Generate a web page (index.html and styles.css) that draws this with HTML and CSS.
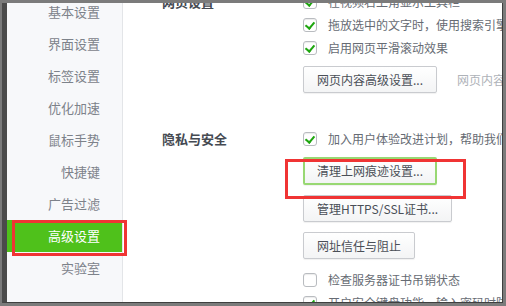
FILE: index.html
```html
<!DOCTYPE html>
<html>
<head>
    <meta http-equiv="Content-Type" content="text/html; charset=utf-8" />
    <title>选项 - 高级设置</title>
    <link rel="stylesheet" href="styles.css">
</head>
<body>

<div class="win">

    <!-- 左侧菜单 -->
    <ul class="side">
        <li class="side-item">基本设置</li>
        <li class="side-item">界面设置</li>
        <li class="side-item">标签设置</li>
        <li class="side-item">优化加速</li>
        <li class="side-item">鼠标手势</li>
        <li class="side-item">快捷键</li>
        <li class="side-item">广告过滤</li>
        <li class="side-item side-item-on">高级设置</li>
        <li class="side-item">实验室</li>
    </ul>

    <!-- 右侧内容 -->
    <div class="main">

        <div class="sec">
            <div class="sec-title">网页设置</div>
            <div class="sec-body">
                <label class="opt"><span class="chk chk-on"></span>在视频右上角显示工具栏</label>
                <label class="opt"><span class="chk chk-on"></span>拖放选中的文字时，使用搜索引擎搜索</label>
                <label class="opt"><span class="chk chk-on"></span>启用网页平滑滚动效果</label>
                <div class="btn-row btn-first">
                    <a class="btn" href="#">网页内容高级设置...</a>
                    <span class="hint">网页内容设置包括Cookie、图片、插件等</span>
                </div>
            </div>
        </div>

        <div class="sec sec-gap">
            <div class="sec-title">隐私与安全</div>
            <div class="sec-body">
                <label class="opt"><span class="chk chk-on"></span>加入用户体验改进计划，帮助我们改进产品</label>
                <div class="btn-row btn-first">
                    <a class="btn btn-focus" href="#">清理上网痕迹设置...</a>
                </div>
                <div class="btn-row">
                    <a class="btn" href="#">管理HTTPS/SSL证书...</a>
                </div>
                <div class="btn-row">
                    <a class="btn" href="#">网址信任与阻止</a>
                </div>
                <label class="opt opt-after-btn"><span class="chk"></span>检查服务器证书吊销状态</label>
                <label class="opt"><span class="chk chk-on"></span>开启安全键盘功能，输入密码时防止被盗</label>
            </div>
        </div>
    </div>

    <!-- 标注红框 -->
    <div class="mark mark-side"></div>
    <div class="mark mark-btn"></div>
</div>

</body>
</html>
```

FILE: styles.css
```css
body{
    margin: 0px;padding: 0px;
    background: #7b7b7b;
    font-family: "Noto Sans CJK SC", "Liberation Sans", sans-serif;
    font-size: 12px;
}

/*窗口*/
.win{
    position: relative;
    width: 495px;height: 299px;
    margin: 3px 0px 0px 2px;
    border-left: 5px solid #4b4b4b;
    border-right: 1px solid #3f3f3f;
    border-bottom: 1px solid #3f3f3f;
    background: #fff;
    overflow: hidden;
    display: flex;
    align-items: flex-start;
}

/*左侧菜单*/
.side{
    list-style: none;
    margin: -7px 0px 0px 0px;padding: 0px;
    width: 115px;height: 320px;
    flex-shrink: 0;
    background: #f7f8fa;
    border-right: 1px solid #e3e5e8;
}
.side-item{
    height: 32px;line-height: 32px;
    padding-right: 22px;
    text-align: right;
    font-size: 13px;color: #7d828a;
}
.side-item-on{
    background: #4fc11b;color: #fff;
}

/*右侧内容*/
.main{
    margin-top: -13px;
    padding-left: 39px;
    flex: 1;
    min-width: 0;
}
.sec{
    display: flex;
}
.sec-gap{
    margin-top: 34px;
}
.sec-title{
    width: 141px;flex-shrink: 0;
    height: 23px;line-height: 23px;
    font-size: 13px;font-weight: bold;color: #454a52;
}
.sec-body{
    flex: 1;min-width: 0;
}

/*复选框行*/
.opt{
    display: flex;align-items: center;
    height: 23px;
    white-space: nowrap;
    color: #666b73;
}
.opt-after-btn{
    margin-top: 9px;
}
.chk{
    width: 12px;height: 12px;
    margin-right: 11px;
    flex-shrink: 0;
    border: 1px solid #b9bcc0;border-radius: 3px;
    background: #fff;
    box-shadow: inset 0px 1px 1px rgba(0,0,0,0.08);
    position: relative;
}
.chk-on::after{
    content: "";
    position: absolute;
    left: 3px;top: 1px;
    width: 4px;height: 7px;
    border-right: 2px solid #1ea60f;
    border-bottom: 2px solid #1ea60f;
    transform: rotate(40deg);
}

/*按钮*/
.btn-row{
    display: flex;align-items: center;
    margin-top: 10px;
    white-space: nowrap;
}
.btn-first{
    margin-top: 7px;
}
.btn{
    display: block;
    box-sizing: border-box;
    height: 27px;line-height: 25px;
    padding: 0px 13px;
    border: 1px solid #c9cbcf;border-radius: 2px;
    background: linear-gradient(#ffffff, #f3f4f5);
    box-shadow: 0px 1px 1px rgba(0,0,0,0.06);
    color: #4a4f57;text-decoration: none;
}
.btn-focus{
    height: 28px;line-height: 24px;
    padding: 0px 12px;
    border: 2px solid #98d873;
}
.hint{
    margin-left: 20px;
    color: #aeb2b8;
}

/*标注红框*/
.mark{
    position: absolute;
    box-sizing: border-box;
    border: 3px solid #f03434;
}
.mark-side{
    left: 5px;top: 217px;
    width: 115px;height: 36px;
}
.mark-btn{
    left: 278px;top: 156px;
    width: 181px;height: 40px;
}
```
